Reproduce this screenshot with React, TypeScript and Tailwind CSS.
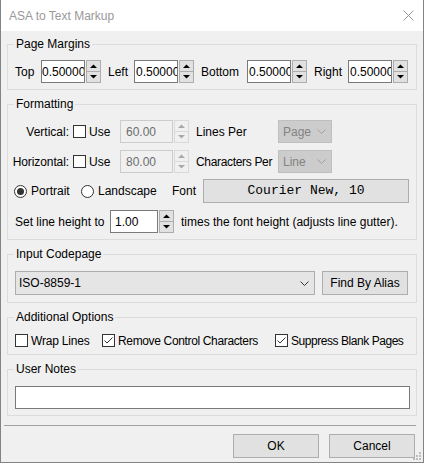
import React from "react";

const Up = ({ c }: { c: string }) => (
  <svg width="7" height="4" viewBox="0 0 7 4"><path d="M0 4 L3.5 0.5 L7 4Z" fill={c} /></svg>
);
const Down = ({ c }: { c: string }) => (
  <svg width="7" height="4" viewBox="0 0 7 4"><path d="M0 0 L3.5 3.5 L7 0Z" fill={c} /></svg>
);

const Spin = ({ disabled = false }: { disabled?: boolean }) => (
  <div className="ml-[1px] flex h-[23px] w-[15px] flex-col">
    <div
      className={
        disabled
          ? "flex h-[12px] items-center justify-center border border-[#d9d9d9] bg-[#f0f0f0]"
          : "flex h-[12px] items-center justify-center border border-[#adadad] bg-[#e1e1e1]"
      }
    >
      <Up c={disabled ? "#a8a8a8" : "#000"} />
    </div>
    <div
      className={
        disabled
          ? "flex h-[11px] items-center justify-center border border-t-0 border-[#d9d9d9] bg-[#f0f0f0]"
          : "flex h-[11px] items-center justify-center border border-t-0 border-[#adadad] bg-[#e1e1e1]"
      }
    >
      <Down c={disabled ? "#a8a8a8" : "#000"} />
    </div>
  </div>
);

const Check = ({ checked = false }: { checked?: boolean }) => (
  <div className="flex h-[13px] w-[13px] shrink-0 items-center justify-center border border-[#333] bg-white">
    {checked && (
      <svg width="11" height="11" viewBox="0 0 11 11">
        <path d="M1.5 5.5 L4 8 L9.5 2.5" stroke="#333" strokeWidth="1" fill="none" />
      </svg>
    )}
  </div>
);

const Radio = ({ on = false }: { on?: boolean }) => (
  <div className="flex h-[13px] w-[13px] shrink-0 items-center justify-center rounded-full border border-[#333] bg-white">
    {on && <div className="h-[7px] w-[7px] rounded-full bg-[#333]" />}
  </div>
);

const Chevron = ({ c }: { c: string }) => (
  <svg width="9" height="5" viewBox="0 0 9 5"><path d="M0.5 0.5 L4.5 4.5 L8.5 0.5" stroke={c} strokeWidth="1" fill="none" /></svg>
);

const MarginInput = ({ caret = false }: { caret?: boolean }) => (
  <div className="flex h-[23px] w-[44px] items-center overflow-hidden border border-[#7a7a7a] bg-white pl-[1px] whitespace-nowrap">
    {caret && <span className="mr-[-1px] inline-block h-[15px] w-[1px] bg-black" />}
    <span>0.50000</span>
  </div>
);

function Group({ title, className, children }: { title: string; className: string; children: React.ReactNode }) {
  return (
    <fieldset className={"w-[410px] border border-[#dcdcdc] pl-[7px] pr-[6px] " + className}>
      <legend className="ml-[-1px] px-[2px] text-[12px] leading-[14px]">{title}</legend>
      {children}
    </fieldset>
  );
}

export default function App() {
  return (
    <div className="relative flex h-[463px] w-[424px] flex-col border-x border-b border-[#838383] bg-[#f0f0f0] font-['Liberation_Sans',Arial,sans-serif] text-[12px] text-black">
      {/* title bar */}
      <div className="flex h-[31px] shrink-0 items-center justify-between bg-white">
        <span className="pl-[8px] text-[12px] text-[#999]">ASA to Text Markup</span>
        <svg className="mr-[9px]" width="11" height="11" viewBox="0 0 11 11">
          <path d="M0.5 0.5 L10.5 10.5 M10.5 0.5 L0.5 10.5" stroke="#999" strokeWidth="1" />
        </svg>
      </div>

      <div className="flex flex-col px-[6px]">
        {/* Page Margins */}
        <Group title="Page Margins" className="mt-[6px] pt-[9px] pb-[6px]">
          <div className="flex h-[23px] items-center">
            <span className="w-[26px]">Top</span>
            <MarginInput caret />
            <Spin />
            <span className="ml-[7px] w-[26px]">Left</span>
            <MarginInput />
            <Spin />
            <span className="ml-[7px] w-[46px]">Bottom</span>
            <MarginInput />
            <Spin />
            <span className="ml-[7px] w-[34px]">Right</span>
            <MarginInput />
            <Spin />
          </div>
        </Group>

        {/* Formatting */}
        <Group title="Formatting" className="mt-[7px] pt-[9px] pb-[6px]">
          <div className="flex flex-col">
            <div className="flex h-[23px] items-center">
              <span className="ml-[-4px] w-[58px] text-right whitespace-nowrap">Vertical:</span>
              <div className="ml-[4px]"><Check /></div>
              <span className="ml-[3px] w-[31px]">Use</span>
              <div className="flex h-[23px] w-[53px] items-center border border-[#cccccc] bg-[#f0f0f0] pl-[5px] text-[#6d6d6d]">60.00</div>
              <Spin disabled />
              <span className="ml-[7px] w-[82px]">Lines Per</span>
              <div className="flex h-[23px] w-[54px] items-center justify-between border border-[#bfbfbf] bg-[#cccccc] pr-[5px] pl-[4px] text-[#838383]">
                <span>Page</span>
                <Chevron c="#a0a0a0" />
              </div>
            </div>
            <div className="mt-[7px] flex h-[23px] items-center">
              <span className="ml-[-4px] w-[58px] text-right whitespace-nowrap tracking-[-0.1px]">Horizontal:</span>
              <div className="ml-[4px]"><Check /></div>
              <span className="ml-[3px] w-[31px]">Use</span>
              <div className="flex h-[23px] w-[53px] items-center border border-[#cccccc] bg-[#f0f0f0] pl-[5px] text-[#6d6d6d]">80.00</div>
              <Spin disabled />
              <span className="ml-[7px] w-[82px] whitespace-nowrap tracking-[-0.33px]">Characters Per</span>
              <div className="flex h-[23px] w-[54px] items-center justify-between border border-[#bfbfbf] bg-[#cccccc] pr-[5px] pl-[4px] text-[#838383]">
                <span>Line</span>
                <Chevron c="#a0a0a0" />
              </div>
            </div>
            <div className="mt-[6px] flex h-[24px] items-center">
              <div className="ml-[-1px]"><Radio on /></div>
              <span className="ml-[4px] w-[50px]">Portrait</span>
              <Radio />
              <span className="ml-[4px] w-[74px]">Landscape</span>
              <span className="w-[31px]">Font</span>
              <div className="flex h-[24px] w-[206px] items-center justify-center border border-[#adadad] bg-[#e1e1e1] font-['Liberation_Mono',monospace] text-[13px]">
                Courier New, 10
              </div>
            </div>
            <div className="mt-[7px] flex h-[23px] items-center">
              <span className="w-[95px] whitespace-nowrap">Set line height to</span>
              <div className="flex h-[23px] w-[48px] items-center border border-[#7a7a7a] bg-white pl-[4px]">1.00</div>
              <Spin />
              <span className="ml-[7px] whitespace-nowrap">times the font height (adjusts line gutter).</span>
            </div>
          </div>
        </Group>

        {/* Input Codepage */}
        <Group title="Input Codepage" className="mt-[7px] pt-[10px] pb-[7px]">
          <div className="flex h-[24px] items-center">
            <div className="flex h-[24px] w-[300px] items-center justify-between border border-[#adadad] bg-[#e5e5e5] pr-[5px] pl-[3px]">
              <span>ISO-8859-1</span>
              <Chevron c="#333" />
            </div>
            <div className="ml-[7px] flex h-[24px] w-[86px] items-center justify-center border border-[#adadad] bg-[#e1e1e1]">
              Find By Alias
            </div>
          </div>
        </Group>

        {/* Additional Options */}
        <Group title="Additional Options" className="mt-[7px] pt-[9px] pb-[6px]">
          <div className="flex h-[15px] items-center">
            <Check />
            <span className="ml-[3px] w-[71px] whitespace-nowrap tracking-[-0.2px]">Wrap Lines</span>
            <Check checked />
            <span className="ml-[3px] w-[157px] whitespace-nowrap tracking-[-0.35px]">Remove Control Characters</span>
            <Check checked />
            <span className="ml-[3px] whitespace-nowrap tracking-[-0.45px]">Suppress Blank Pages</span>
          </div>
        </Group>

        {/* User Notes */}
        <Group title="User Notes" className="mt-[7px] pt-[10px] pb-[6px]">
          <div className="h-[23px] w-[395px] border border-[#7a7a7a] bg-white" />
        </Group>

        <div className="mt-[9px] ml-[-3px] h-[1px] w-[412px] bg-[#a0a0a0]" />

        <div className="mt-[8px] flex justify-end pr-[2px]">
          <div className="flex h-[24px] w-[86px] items-center justify-center border border-[#adadad] bg-[#e1e1e1]">OK</div>
          <div className="ml-[10px] flex h-[24px] w-[86px] items-center justify-center border border-[#adadad] bg-[#e1e1e1]">Cancel</div>
        </div>
      </div>

      <svg className="absolute right-[1px] bottom-[1px]" width="10" height="10" viewBox="0 0 10 10">
        <g fill="#bcbcbc">
          <rect x="7" y="1" width="2" height="2" />
          <rect x="4" y="4" width="2" height="2" />
          <rect x="7" y="4" width="2" height="2" />
          <rect x="1" y="7" width="2" height="2" />
          <rect x="4" y="7" width="2" height="2" />
          <rect x="7" y="7" width="2" height="2" />
        </g>
      </svg>
    </div>
  );
}
